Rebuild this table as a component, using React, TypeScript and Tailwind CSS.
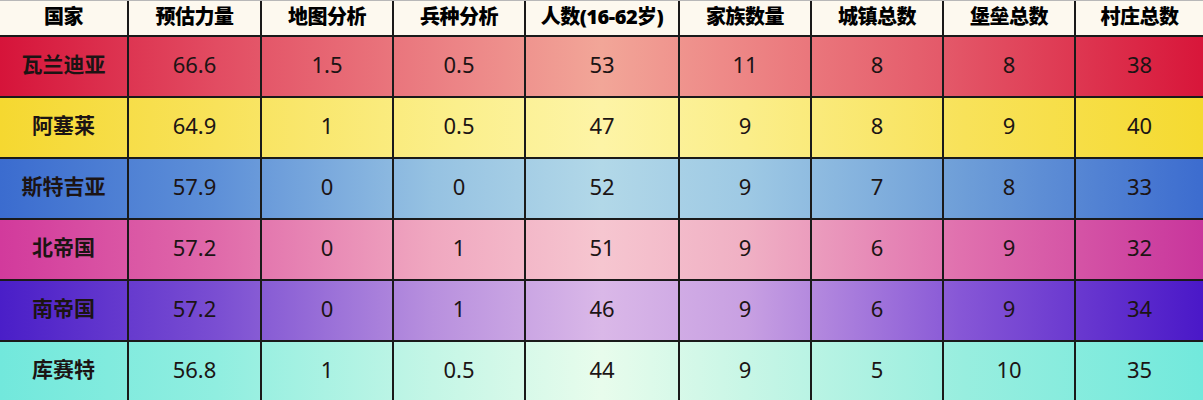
import React from "react";

const headers = ["国家", "预估力量", "地图分析", "兵种分析", "人数(16-62岁)", "家族数量", "城镇总数", "堡垒总数", "村庄总数"];

const widths = ["w-[127px]", "w-[133px]", "w-[132px]", "w-[132px]", "w-[154px]", "w-[132px]", "w-[132px]", "w-[132px]", "w-[129px]"];

const rows = [
  {
    cells: ["瓦兰迪亚", "66.6", "1.5", "0.5", "53", "11", "8", "8", "38"],
    bg: "bg-[linear-gradient(90deg,#d6143a_0%,#e24c62_18%,#ec8486_38%,#f2a698_50%,#ee8a88_60%,#e45a6a_78%,#d8163a_100%)]",
  },
  {
    cells: ["阿塞莱", "64.9", "1", "0.5", "47", "9", "8", "9", "40"],
    bg: "bg-[linear-gradient(90deg,#f5d830_0%,#f8e25a_18%,#fbef8c_38%,#fdf4a6_50%,#fbee8a_62%,#f8e25a_80%,#f5da30_100%)]",
  },
  {
    cells: ["斯特吉亚", "57.9", "0", "0", "52", "9", "7", "8", "33"],
    bg: "bg-[linear-gradient(90deg,#3b6ccf_0%,#5e90d8_18%,#96c2e2_36%,#b2d8e8_50%,#9ec9e4_62%,#6e9ed8_80%,#3c6ccf_100%)]",
  },
  {
    cells: ["北帝国", "57.2", "0", "1", "51", "9", "6", "9", "32"],
    bg: "bg-[linear-gradient(90deg,#d23a9c_0%,#e06aaa_18%,#f0a8c0_36%,#f6c6d0_50%,#f0b0c4_62%,#e070ae_80%,#c8359c_100%)]",
  },
  {
    cells: ["南帝国", "57.2", "0", "1", "46", "9", "6", "9", "34"],
    bg: "bg-[linear-gradient(90deg,#4a1ec8_0%,#7a4ed2_18%,#b890de_36%,#dab8e8_50%,#c8a0e2_62%,#8656d6_80%,#4a18c8_100%)]",
  },
  {
    cells: ["库赛特", "56.8", "1", "0.5", "44", "9", "5", "10", "35"],
    bg: "bg-[linear-gradient(90deg,#72e8dc_0%,#90eee0_18%,#c4f6e6_36%,#e8fcec_50%,#c8f6e6_62%,#98eedf_80%,#72e9dc_100%)]",
  },
];

export default function App() {
  return (
    <div className="w-[1203px] h-[400px] overflow-hidden bg-white font-['Noto_Sans','Noto_Sans_CJK_SC',sans-serif] text-[#1c1414]">
      {/* header */}
      <div className="flex h-[35px] bg-[#fdf9ef] border-t border-[#b8b8b8]">
        {headers.map((h, i) => (
          <div
            key={h}
            className={`${widths[i]} flex items-center justify-center pb-[2px] text-[20px] font-black text-black tracking-tight ${i > 0 ? "border-l-2 border-[#1a1a1a]" : ""}`}
          >
            {h}
          </div>
        ))}
      </div>

      {rows.map((r) => (
        <div key={r.cells[0]} className={`flex h-[61px] border-t-2 border-[#1a1a1a] ${r.bg}`}>
          {r.cells.map((c, i) => (
            <div
              key={i}
              className={`${widths[i]} flex items-center justify-center pb-[4px] ${i === 0 ? "text-[21px] font-semibold" : "text-[22px]"} ${i > 0 ? "border-l-2 border-[#1a1a1a]" : ""}`}
            >
              {c}
            </div>
          ))}
        </div>
      ))}
    </div>
  );
}
